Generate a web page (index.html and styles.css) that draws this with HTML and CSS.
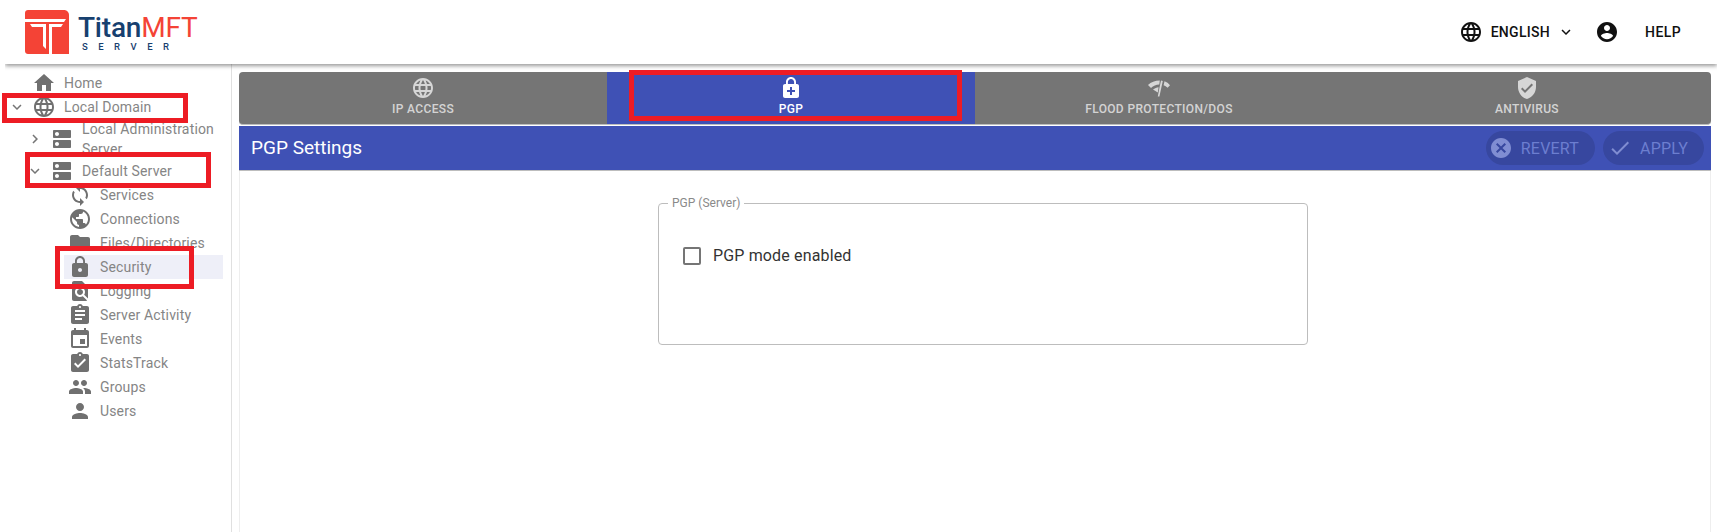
FILE: index.html
```html
<!DOCTYPE html>
<html lang="en">
<head>
  <meta charset="UTF-8">
  <title>TitanMFT Server - PGP Settings</title>
  <link rel="stylesheet" href="styles.css">
</head>
<body>

<svg class="icon-defs" xmlns="http://www.w3.org/2000/svg">
  <symbol id="i-home" viewBox="0 0 24 24"><path d="M10 20v-6h4v6h5v-8h3L12 3 2 12h3v8z"/></symbol>
  <symbol id="i-globe" viewBox="0 0 24 24"><path d="M11.99 2C6.47 2 2 6.48 2 12s4.47 10 9.99 10C17.52 22 22 17.52 22 12S17.52 2 11.99 2zm6.93 6h-2.95c-.32-1.25-.78-2.45-1.38-3.56 1.84.63 3.37 1.91 4.33 3.56zM12 4.04c.83 1.2 1.48 2.53 1.91 3.96h-3.82c.43-1.43 1.08-2.76 1.91-3.96zM4.26 14C4.1 13.36 4 12.69 4 12s.1-1.36.26-2h3.38c-.08.66-.14 1.32-.14 2 0 .68.06 1.34.14 2H4.26zm.82 2h2.95c.32 1.25.78 2.45 1.38 3.56-1.84-.63-3.37-1.9-4.33-3.56zm2.95-8H5.08c.96-1.66 2.49-2.93 4.33-3.56C8.81 5.55 8.35 6.75 8.03 8zM12 19.96c-.83-1.2-1.48-2.53-1.91-3.96h3.82c-.43 1.43-1.08 2.76-1.91 3.96zM14.34 14H9.66c-.09-.66-.16-1.32-.16-2 0-.68.07-1.35.16-2h4.68c.09.65.16 1.32.16 2 0 .68-.07 1.34-.16 2zm.25 5.56c.6-1.11 1.06-2.31 1.38-3.56h2.95c-.96 1.65-2.49 2.93-4.33 3.56zM16.36 14c.08-.66.14-1.32.14-2 0-.68-.06-1.34-.14-2h3.38c.16.64.26 1.31.26 2s-.1 1.36-.26 2h-3.38z"/></symbol>
  <symbol id="i-dns" viewBox="0 0 24 24"><path d="M20 13H4c-.55 0-1 .45-1 1v6c0 .55.45 1 1 1h16c.55 0 1-.45 1-1v-6c0-.55-.45-1-1-1zM7 19c-1.1 0-2-.9-2-2s.9-2 2-2 2 .9 2 2-.9 2-2 2zM20 3H4c-.55 0-1 .45-1 1v6c0 .55.45 1 1 1h16c.55 0 1-.45 1-1V4c0-.55-.45-1-1-1zM7 9c-1.1 0-2-.9-2-2s.9-2 2-2 2 .9 2 2-.9 2-2 2z"/></symbol>
  <symbol id="i-sync" viewBox="0 0 24 24"><path d="M12 4V1L8 5l4 4V6c3.31 0 6 2.69 6 6 0 1.01-.25 1.97-.7 2.8l1.46 1.46C19.54 15.03 20 13.57 20 12c0-4.42-3.58-8-8-8zm0 14c-3.31 0-6-2.69-6-6 0-1.01.25-1.97.7-2.8L5.24 7.74C4.46 8.97 4 10.43 4 12c0 4.42 3.58 8 8 8v3l4-4-4-4v3z"/></symbol>
  <symbol id="i-public" viewBox="0 0 24 24"><path d="M12 2C6.48 2 2 6.48 2 12s4.48 10 10 10 10-4.48 10-10S17.52 2 12 2zm-1 17.93c-3.95-.49-7-3.85-7-7.93 0-.62.08-1.21.21-1.79L9 15v1c0 1.1.9 2 2 2v1.93zm6.9-2.54c-.26-.81-1-1.39-1.9-1.39h-1v-3c0-.55-.45-1-1-1H8v-2h2c.55 0 1-.45 1-1V7h2c1.1 0 2-.9 2-2v-.41c2.93 1.19 5 4.06 5 7.41 0 2.08-.8 3.97-2.1 5.39z"/></symbol>
  <symbol id="i-folder" viewBox="0 0 24 24"><path d="M10 4H4c-1.1 0-1.99.9-1.99 2L2 18c0 1.1.9 2 2 2h16c1.1 0 2-.9 2-2V8c0-1.1-.9-2-2-2h-8l-2-2z"/></symbol>
  <symbol id="i-lock" viewBox="0 0 24 24"><path d="M18 8h-1V6c0-2.76-2.24-5-5-5S7 3.24 7 6v2H6c-1.1 0-2 .9-2 2v10c0 1.1.9 2 2 2h12c1.1 0 2-.9 2-2V10c0-1.1-.9-2-2-2zm-6 9c-1.1 0-2-.9-2-2s.9-2 2-2 2 .9 2 2-.9 2-2 2zm3.1-9H8.9V6c0-1.71 1.39-3.1 3.1-3.1 1.71 0 3.1 1.39 3.1 3.1v2z"/></symbol>
  <symbol id="i-find" viewBox="0 0 24 24"><path d="M20 19.59V8l-6-6H6c-1.1 0-1.99.9-1.99 2L4 20c0 1.1.89 2 1.99 2H18c.45 0 .85-.15 1.19-.4l-4.43-4.43c-.8.52-1.74.83-2.76.83-2.76 0-5-2.24-5-5s2.24-5 5-5 5 2.24 5 5c0 1.02-.31 1.96-.83 2.75L20 19.59zM9 13c0 1.66 1.34 3 3 3s3-1.34 3-3-1.34-3-3-3-3 1.34-3 3z"/></symbol>
  <symbol id="i-assignment" viewBox="0 0 24 24"><path d="M19 3h-4.18C14.4 1.84 13.3 1 12 1c-1.3 0-2.4.84-2.82 2H5c-1.1 0-2 .9-2 2v14c0 1.1.9 2 2 2h14c1.1 0 2-.9 2-2V5c0-1.1-.9-2-2-2zm-7 0c.55 0 1 .45 1 1s-.45 1-1 1-1-.45-1-1 .45-1 1-1zm2 14H7v-2h7v2zm3-4H7v-2h10v2zm0-4H7V7h10v2z"/></symbol>
  <symbol id="i-event" viewBox="0 0 24 24"><path d="M17 12h-5v5h5v-5zM16 1v2H8V1H6v2H5c-1.11 0-1.99.9-1.99 2L3 19c0 1.1.89 2 2 2h14c1.1 0 2-.9 2-2V5c0-1.1-.9-2-2-2h-1V1h-2zm3 18H5V8h14v11z"/></symbol>
  <symbol id="i-turned-in" viewBox="0 0 24 24"><path d="M19 3h-4.18C14.4 1.84 13.3 1 12 1c-1.3 0-2.4.84-2.82 2H5c-1.1 0-2 .9-2 2v14c0 1.1.9 2 2 2h14c1.1 0 2-.9 2-2V5c0-1.1-.9-2-2-2zm-7 0c.55 0 1 .45 1 1s-.45 1-1 1-1-.45-1-1 .45-1 1-1zm-2 14l-4-4 1.41-1.41L10 14.17l6.59-6.59L18 9l-8 8z"/></symbol>
  <symbol id="i-people" viewBox="0 0 24 24"><path d="M16 11c1.66 0 2.99-1.34 2.99-3S17.66 5 16 5c-1.66 0-3 1.34-3 3s1.34 3 3 3zm-8 0c1.66 0 2.99-1.34 2.99-3S9.66 5 8 5C6.34 5 5 6.34 5 8s1.34 3 3 3zm0 2c-2.33 0-7 1.17-7 3.5V19h14v-2.5c0-2.33-4.67-3.5-7-3.5zm8 0c-.29 0-.62.02-.97.05 1.16.84 1.97 1.97 1.97 3.45V19h6v-2.5c0-2.33-4.67-3.5-7-3.5z"/></symbol>
  <symbol id="i-person" viewBox="0 0 24 24"><path d="M12 12c2.21 0 4-1.79 4-4s-1.79-4-4-4-4 1.79-4 4 1.79 4 4 4zm0 2c-2.67 0-8 1.34-8 4v2h16v-2c0-2.66-5.33-4-8-4z"/></symbol>
  <symbol id="i-account" viewBox="0 0 24 24"><path d="M12 2C6.48 2 2 6.48 2 12s4.48 10 10 10 10-4.48 10-10S17.52 2 12 2zm0 3c1.66 0 3 1.34 3 3s-1.34 3-3 3-3-1.34-3-3 1.34-3 3-3zm0 14.2c-2.5 0-4.71-1.28-6-3.22.03-1.99 4-3.08 6-3.08 1.99 0 5.97 1.09 6 3.08-1.29 1.94-3.5 3.22-6 3.22z"/></symbol>
  <symbol id="i-more" viewBox="0 0 24 24"><path d="M16.59 8.59L12 13.17 7.41 8.59 6 10l6 6 6-6z"/></symbol>
  <symbol id="i-right" viewBox="0 0 24 24"><path d="M10 6L8.59 7.41 13.17 12l-4.58 4.59L10 18l6-6z"/></symbol>
  <symbol id="i-cancel" viewBox="0 0 24 24"><path d="M12 2C6.47 2 2 6.47 2 12s4.47 10 10 10 10-4.47 10-10S17.53 2 12 2zm5 13.59L15.59 17 12 13.41 8.41 17 7 15.59 10.59 12 7 8.41 8.41 7 12 10.59 15.59 7 17 8.41 13.41 12 17 15.59z"/></symbol>
  <symbol id="i-check" viewBox="0 0 24 24"><path d="M9 16.17L4.83 12l-1.42 1.41L9 19 21 7l-1.41-1.41z"/></symbol>
  <symbol id="i-lock-plus" viewBox="0 0 24 24"><path d="M18 8h-1V6c0-2.76-2.24-5-5-5S7 3.24 7 6v2H6c-1.1 0-2 .9-2 2v10c0 1.1.9 2 2 2h12c1.1 0 2-.9 2-2V10c0-1.1-.9-2-2-2zM8.9 6c0-1.71 1.39-3.1 3.1-3.1s3.1 1.39 3.1 3.1v2H8.9V6zM16 16h-3v3h-2v-3H8v-2h3v-3h2v3h3v2z"/></symbol>
  <symbol id="i-flood" viewBox="0 0 24 24"><path d="M1 9C4 6 8 4.5 12.8 4.5L12.3 8.6C9 8.7 6.4 9.8 4 12zM6 13.6C7.8 12.2 9.6 11.4 11.6 11.2L10.8 16.5zM14 4.6L15.8 5 12.4 20.5H10.8L12.2 13zM17.5 5.3C19.6 6 21.6 7.3 23 9.3L20.6 11.8C19.4 10.6 18 9.7 16.6 9.2z"/></symbol>
  <symbol id="i-shield" viewBox="0 0 24 24"><path d="M12 1L3 5v6c0 5.55 3.84 10.74 9 12 5.16-1.26 9-6.45 9-12V5l-9-4zm-2 16l-4-4 1.41-1.41L10 14.17l6.59-6.59L18 9l-8 8z"/></symbol>
</svg>

<header class="topbar">
  <div class="logo">
    <svg class="logo-mark" viewBox="0 0 44 44">
      <path class="logo-square" d="M3 0H39C41.8 0 44 2.2 44 5V44H3C1.3 44 0 42.7 0 41V3C0 1.3 1.3 0 3 0Z"/>
      <path class="logo-t" d="M0 9H41L39 12H0ZM5 14H21V39L18 36V17H7ZM24 14H38L36 17H27V44H24Z"/>
    </svg>
    <div class="logo-text">
      <div class="logo-name">Titan<span>MFT</span></div>
      <div class="logo-sub">SERVER</div>
    </div>
  </div>
  <nav class="top-links">
    <svg class="top-globe"><use href="#i-globe"/></svg>
    <span class="lang">ENGLISH</span>
    <svg class="top-chev"><use href="#i-more"/></svg>
    <svg class="top-account"><use href="#i-account"/></svg>
    <span class="help">HELP</span>
  </nav>
</header>

<div class="layout">
  <aside class="sidebar">
    <div class="tree-row">
      <span class="chev"></span>
      <div class="tree-item"><svg><use href="#i-home"/></svg><span>Home</span></div>
    </div>
    <div class="tree-row">
      <svg class="chev"><use href="#i-more"/></svg>
      <div class="tree-item"><svg><use href="#i-globe"/></svg><span>Local Domain</span></div>
    </div>
    <div class="tree-row level-1">
      <svg class="chev"><use href="#i-right"/></svg>
      <div class="tree-item tall"><svg><use href="#i-dns"/></svg><span>Local Administration Server</span></div>
    </div>
    <div class="tree-row level-1">
      <svg class="chev"><use href="#i-more"/></svg>
      <div class="tree-item"><svg><use href="#i-dns"/></svg><span>Default Server</span></div>
    </div>
    <div class="tree-row level-2">
      <span class="chev"></span>
      <div class="tree-item"><svg><use href="#i-sync"/></svg><span>Services</span></div>
    </div>
    <div class="tree-row level-2">
      <span class="chev"></span>
      <div class="tree-item"><svg><use href="#i-public"/></svg><span>Connections</span></div>
    </div>
    <div class="tree-row level-2">
      <span class="chev"></span>
      <div class="tree-item"><svg><use href="#i-folder"/></svg><span>Files/Directories</span></div>
    </div>
    <div class="tree-row level-2">
      <span class="chev"></span>
      <div class="tree-item selected"><svg><use href="#i-lock"/></svg><span>Security</span></div>
    </div>
    <div class="tree-row level-2">
      <span class="chev"></span>
      <div class="tree-item"><svg><use href="#i-find"/></svg><span>Logging</span></div>
    </div>
    <div class="tree-row level-2">
      <span class="chev"></span>
      <div class="tree-item"><svg><use href="#i-assignment"/></svg><span>Server Activity</span></div>
    </div>
    <div class="tree-row level-2">
      <span class="chev"></span>
      <div class="tree-item"><svg><use href="#i-event"/></svg><span>Events</span></div>
    </div>
    <div class="tree-row level-2">
      <span class="chev"></span>
      <div class="tree-item"><svg><use href="#i-turned-in"/></svg><span>StatsTrack</span></div>
    </div>
    <div class="tree-row level-2">
      <span class="chev"></span>
      <div class="tree-item"><svg><use href="#i-people"/></svg><span>Groups</span></div>
    </div>
    <div class="tree-row level-2">
      <span class="chev"></span>
      <div class="tree-item"><svg><use href="#i-person"/></svg><span>Users</span></div>
    </div>
  </aside>

  <main class="content">
    <div class="tabs">
      <div class="tab"><svg><use href="#i-globe"/></svg><span>IP Access</span></div>
      <div class="tab active"><svg><use href="#i-lock-plus"/></svg><span>PGP</span></div>
      <div class="tab"><svg><use href="#i-flood"/></svg><span>Flood Protection/DoS</span></div>
      <div class="tab"><svg><use href="#i-shield"/></svg><span>Antivirus</span></div>
    </div>
    <div class="toolbar">
      <h2>PGP Settings</h2>
      <div class="toolbar-actions">
        <button class="revert" disabled><svg><use href="#i-cancel"/></svg>Revert</button>
        <button class="apply" disabled><svg><use href="#i-check"/></svg>Apply</button>
      </div>
    </div>
    <div class="panel">
      <fieldset class="group">
        <legend>PGP (Server)</legend>
        <label class="check-row"><span class="checkbox"></span>PGP mode enabled</label>
      </fieldset>
    </div>
  </main>
</div>

<!-- red marks drawn over the screenshot -->
<div class="mark mark-domain"></div>
<div class="mark mark-server"></div>
<div class="mark mark-security"></div>
<div class="mark mark-pgp"></div>

</body>
</html>
```

FILE: styles.css
```css
html, body {
  height: 100%;
}
body {
  margin: 0;
  height: 532px;
  overflow: hidden;
  background: white;
  color: #212121;
  font-family: Roboto, "Liberation Sans", sans-serif;
  font-size: 14px;
  position: relative;
}
.icon-defs {
  display: none;
}

/* top bar */
.topbar {
  height: 64px;
  margin-left: 5px;
  padding: 0 36px 0 20px;
  display: flex;
  align-items: center;
  justify-content: space-between;
  background: white;
  box-shadow: 0 2px 4px rgba(0,0,0,0.4);
  clip-path: inset(0 0 -10px 0);
  position: relative;
}
.logo {
  display: flex;
  align-items: center;
  gap: 9px;
}
.logo-mark {
  width: 44px;
  height: 44px;
}
.logo-square {
  fill: #f44336;
}
.logo-t {
  fill: white;
}
.logo-text {
  padding-top: 1px;
}
.logo-name {
  font-size: 28px;
  font-weight: 500;
  line-height: 29px;
  color: #17406f;
  letter-spacing: -0.2px;
}
.logo-name span {
  color: #f44336;
  font-weight: 400;
}
.logo-sub {
  margin-left: 4px;
  font-size: 9.5px;
  line-height: 10px;
  font-weight: 500;
  letter-spacing: 10.5px;
  color: #17406f;
}
.top-links {
  display: flex;
  align-items: center;
  color: #111;
  font-weight: 500;
}
.top-links svg {
  width: 24px;
  height: 24px;
  fill: #111;
}
.lang {
  margin-left: 8px;
  letter-spacing: 0.3px;
}
.top-links .top-chev {
  width: 18px;
  height: 18px;
  margin-left: 7px;
}
.top-links .top-account {
  margin-left: 20px;
}
.help {
  margin-left: 26px;
  letter-spacing: 0.4px;
}

/* sidebar tree */
.layout {
  display: flex;
  height: 468px;
}
.sidebar {
  width: 223px;
  flex-shrink: 0;
  padding: 7px 8px 0 0;
  border-right: 1px solid #e0e0e0;
  box-sizing: content-box;
  color: #858585;
  letter-spacing: 0.16px;
}
.tree-row {
  display: flex;
  align-items: center;
  padding-left: 8px;
}
.level-1 {
  padding-left: 26px;
}
.level-2 {
  padding-left: 44px;
}
.chev {
  width: 18px;
  height: 18px;
  margin-right: 2px;
  flex-shrink: 0;
  fill: #757575;
}
.tree-item {
  flex: 1;
  min-height: 24px;
  padding-left: 4px;
  display: flex;
  align-items: center;
  gap: 8px;
  line-height: 20px;
}
.tree-item svg {
  width: 24px;
  height: 24px;
  flex-shrink: 0;
  fill: #707070;
}
.tree-item.tall {
  min-height: 40px;
}
.tree-item.selected {
  background: #eeeff8;
}

/* main area */
.content {
  flex: 1;
  padding: 8px 6px 0 7px;
  min-width: 0;
}
.tabs {
  display: flex;
  height: 52px;
  background: #757575;
  border-radius: 4px;
  overflow: hidden;
  border-bottom: 1px solid #bdbdbd;
}
.tab {
  flex: 1;
  display: flex;
  flex-direction: column;
  align-items: center;
  padding-top: 4px;
  font-size: 12px;
  font-weight: 500;
  letter-spacing: 0.35px;
  text-transform: uppercase;
  color: rgba(255,255,255,0.7);
}
.tab svg {
  width: 24px;
  height: 24px;
  fill: rgba(255,255,255,0.7);
  margin-bottom: 2px;
}
.tab.active {
  background: #3f51b5;
  color: white;
}
.tab.active svg {
  fill: white;
}
.toolbar {
  height: 44px;
  margin-top: 1px;
  padding: 0 7px 0 12px;
  display: flex;
  align-items: center;
  justify-content: space-between;
  background: #3f51b5;
  border-bottom: 1px solid #bdbdbd;
  color: white;
}
.toolbar h2 {
  margin: 0 0 2px;
  font-size: 19px;
  font-weight: 400;
}
.toolbar-actions {
  display: flex;
  gap: 8px;
}
.toolbar button {
  height: 34px;
  padding: 0 16px 0 3px;
  display: flex;
  align-items: center;
  gap: 8px;
  border: none;
  border-radius: 17px;
  background: rgba(0,0,0,0.12);
  color: #6c7ed0;
  font-family: Roboto, "Liberation Sans", sans-serif;
  font-size: 16px;
  letter-spacing: 0.2px;
  text-transform: uppercase;
}
.toolbar button svg {
  width: 24px;
  height: 24px;
  fill: #808dd2;
}
.toolbar .apply {
  padding-left: 5px;
}
.panel {
  height: 360px;
  padding: 25px 0 0 418px;
  border-left: 1px solid #eeeeee;
  border-right: 1px solid #eeeeee;
}
.group {
  width: 650px;
  height: 149px;
  margin: 0;
  padding: 0 0 0 24px;
  box-sizing: border-box;
  border: 1px solid #bdbdbd;
  border-radius: 4px;
}
.group legend {
  margin-left: -15px;
  padding: 0 4px;
  font-size: 12px;
  color: #8a8a8a;
}
.check-row {
  margin-top: 34px;
  display: flex;
  align-items: center;
  gap: 12px;
  font-size: 16px;
  letter-spacing: 0.15px;
  line-height: 24px;
  color: #333;
}
.checkbox {
  width: 18px;
  height: 18px;
  box-sizing: border-box;
  border: 2px solid #757575;
  border-radius: 2px;
}

/* annotations */
.mark {
  position: absolute;
  box-sizing: border-box;
  border: 5px solid #ed1c24;
}
.mark-domain {
  left: 2px;
  top: 93px;
  width: 186px;
  height: 30px;
}
.mark-server {
  left: 25px;
  top: 152px;
  width: 186px;
  height: 36px;
}
.mark-security {
  left: 55px;
  top: 246px;
  width: 139px;
  height: 43px;
}
.mark-pgp {
  left: 629px;
  top: 70px;
  width: 333px;
  height: 51px;
}
```
